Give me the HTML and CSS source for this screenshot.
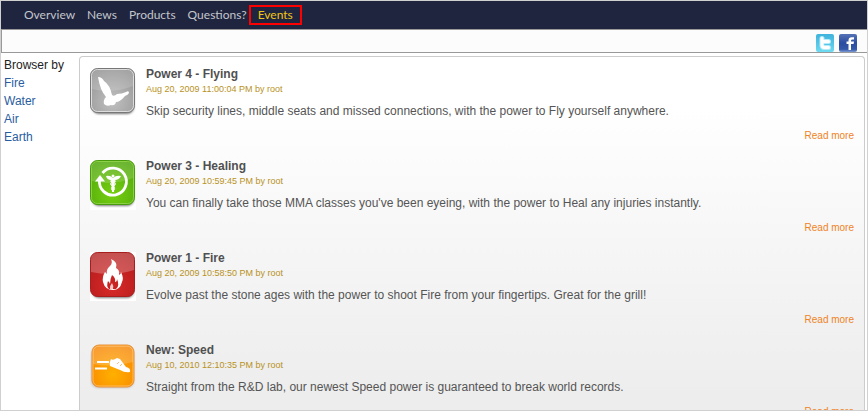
FILE: index.html
```html
<!DOCTYPE html>
<html lang="en">
<head>
<meta charset="utf-8">
<title>Events</title>
<link rel="stylesheet" href="styles.css">
</head>
<body>
<header>
  <nav class="nav">
    <a href="#">Overview</a>
    <a href="#">News</a>
    <a href="#">Products</a>
    <a href="#">Questions?</a>
    <a href="#" class="current">Events</a>
  </nav>
  <div class="social">
    <a href="#" aria-label="Twitter">
      <svg width="18" height="18" viewBox="0 0 18 18">
        <defs><linearGradient id="tw" x1="0" y1="0" x2="0" y2="1"><stop offset="0" stop-color="#3fb3dc"/><stop offset=".5" stop-color="#55c4e6"/><stop offset="1" stop-color="#6fdcf2"/></linearGradient></defs>
        <rect width="18" height="18" rx="2" fill="url(#tw)"/>
        <path d="M6 4.500V11Q6 13.500 8.500 13.500H12.500M6 7.500H12.500" fill="none" stroke="#b5ebf8" stroke-width="5" stroke-linecap="round"/>
        <path d="M6 4.500V11Q6 13.500 8.500 13.500H12.500M6 7.500H12.500" fill="none" stroke="#fff" stroke-width="3" stroke-linecap="round"/>
        <path d="M8.500 10.500H13" stroke="#55c4e6"/>
      </svg>
    </a>
    <a href="#" aria-label="Facebook">
      <svg width="18" height="18" viewBox="0 0 18 18">
        <defs><linearGradient id="fb" x1="0" y1="0" x2="0" y2="1"><stop offset="0" stop-color="#5472b4"/><stop offset=".5" stop-color="#2b4da0"/><stop offset=".85" stop-color="#3458a8"/><stop offset="1" stop-color="#7d9bd6"/></linearGradient></defs>
        <rect width="18" height="18" rx="2" fill="url(#fb)"/>
        <path d="M9.500 16V10H7.500V7.500H9.500V6.500Q9.500 3.200 12.700 3.200H15V5.500H13.500Q12 5.500 12 6.800V7.500H15L14.600 10H12V16Z" fill="#fff"/>
      </svg>
    </a>
  </div>
</header>
<div class="columns">
  <aside class="sidebar">
    <div>Browser by</div>
    <a href="#">Fire</a>
    <a href="#">Water</a>
    <a href="#">Air</a>
    <a href="#">Earth</a>
  </aside>
  <main class="panel">
    <article class="entry">
      <svg class="icon" width="46" height="50" viewBox="0 0 46 50">
        <defs>
          <filter id="soft" x="-20%" y="-20%" width="140%" height="140%"><feGaussianBlur stdDeviation="1"/></filter>
          <radialGradient id="gray" cx=".5" cy=".75" r=".8"><stop offset="0" stop-color="#c0c0c0"/><stop offset="1" stop-color="#929292"/></radialGradient>
        </defs>
        <rect x="2" y="5" width="42" height="41" rx="7" fill="#777" filter="url(#soft)"/>
        <rect x=".5" y=".5" width="44" height="44" rx="7" fill="url(#gray)" stroke="#777"/>
        <rect x="1.500" y="1.500" width="42" height="42" rx="6" fill="none" stroke="#ddd"/>
        <path d="M2 8Q2 2 8 2H37Q43 2 43 8V18Q23 26 2 21Z" fill="#fff" opacity=".16"/>
        <path d="M8 9Q12 9 14 13Q20 17 22 27Q24 29 27 26Q32 26 36 24Q39 22 39 25Q38 27 35 28Q30 34 26 34Q25 38 21 37Q17 39 14 36Q13 32 16 29Q10 22 8 9Z" fill="#fff"/>
      </svg>
      <div class="body">
        <h2>Power 4 - Flying</h2>
        <div class="date">Aug 20, 2009 11:00:04 PM by root</div>
        <p>Skip security lines, middle seats and missed connections, with the power to Fly yourself anywhere.</p>
        <a href="#" class="more">Read more</a>
      </div>
    </article>
    <article class="entry">
      <svg class="icon" width="46" height="50" viewBox="0 0 46 50">
        <defs><radialGradient id="green" cx=".5" cy=".75" r=".8"><stop offset="0" stop-color="#76cf10"/><stop offset="1" stop-color="#4ea50b"/></radialGradient></defs>
        <rect width="46" height="50" fill="#fff"/>
        <rect x="2" y="5" width="42" height="41" rx="7" fill="#777" filter="url(#soft)"/>
        <rect x=".5" y=".5" width="44" height="44" rx="7" fill="url(#green)" stroke="#489b0b"/>
        <rect x="1.500" y="1.500" width="42" height="42" rx="6" fill="none" stroke="#8bd046"/>
        <path d="M2 8Q2 2 8 2H37Q43 2 43 8V18Q23 26 2 21Z" fill="#fff" opacity=".16"/>
        <path d="M12.500 13A13.500 13.500 0 1 1 9.500 20" fill="none" stroke="#fff" stroke-width="2.800"/>
        <path d="M5 21.500L10 15L15 21.500Z" fill="#fff"/>
        <path d="M16 16Q20 15 23 18Q26 15 31 16Q29 20 25 20L24 32H22L21 20Q17 20 16 16Z" fill="#fff"/>
        <path d="M20 21Q27 22 25 25Q20 27 22 30M26 21Q19 22 21 25Q26 27 24 30" fill="none" stroke="#fff"/>
        <circle cx="23" cy="16" r="1.500" fill="#fff"/>
      </svg>
      <div class="body">
        <h2>Power 3 - Healing</h2>
        <div class="date">Aug 20, 2009 10:59:45 PM by root</div>
        <p>You can finally take those MMA classes you've been eyeing, with the power to Heal any injuries instantly.</p>
        <a href="#" class="more">Read more</a>
      </div>
    </article>
    <article class="entry">
      <svg class="icon" width="46" height="50" viewBox="0 0 46 50">
        <defs><radialGradient id="red" cx=".5" cy=".75" r=".8"><stop offset="0" stop-color="#d92a2a"/><stop offset="1" stop-color="#b01a1a"/></radialGradient></defs>
        <rect width="46" height="49" fill="#fff"/>
        <rect x="2" y="5" width="42" height="41" rx="7" fill="#777" filter="url(#soft)"/>
        <rect x=".5" y=".5" width="44" height="44" rx="7" fill="url(#red)" stroke="#a81d1d"/>
        <path d="M1 8Q1 1 8 1H37Q44 1 44 8V18Q23 25 1 20Z" fill="#fff" opacity=".24"/>
        <path d="M21 7Q28 10 26 16Q30 18 29 23Q31 22 31 20Q34 26 32 30Q30 38 23 38Q15 38 13 30Q12 25 15 20L17 22Q16 17 20 14Q23 11 21 7Z" fill="#fff"/>
        <path d="M22 23Q26 26 25 30Q27 30 27 27Q30 34 26 37H19Q16 34 18 29Q20 31 20 32Q20 27 22 23Z" fill="#c92222"/>
        <path d="M22 31Q24 34 23 37H20Q20 33 22 31Z" fill="#f6caca"/>
      </svg>
      <div class="body">
        <h2>Power 1 - Fire</h2>
        <div class="date">Aug 20, 2009 10:58:50 PM by root</div>
        <p>Evolve past the stone ages with the power to shoot Fire from your fingertips. Great for the grill!</p>
        <a href="#" class="more">Read more</a>
      </div>
    </article>
    <article class="entry">
      <svg class="icon" width="46" height="50" viewBox="0 0 46 50">
        <defs><radialGradient id="orange" cx=".5" cy=".7" r=".75"><stop offset="0" stop-color="#ffb000"/><stop offset="1" stop-color="#f78300"/></radialGradient></defs>
        <rect x="1" y="4" width="43" height="40" rx="7" fill="#c5c5c5" filter="url(#soft)"/>
        <rect x="2" y="1" width="42" height="42" rx="7" fill="url(#orange)" stroke="#e59038"/>
        <rect x="3" y="2" width="40" height="40" rx="6" fill="none" stroke="#ffba5c"/>
        <path d="M3 8Q3 2 9 2H37Q43 2 43 8V18Q23 24 3 20Z" fill="#fff" opacity=".2"/>
        <path d="M7 18H19M5 24.500H17" stroke="#fff" stroke-width="2"/>
        <path d="M21 15Q23 17 27 14L30 15L36 23Q41 24 40 28Q35 29 30 26L20 22Q19 19 21 15Z" fill="#fff"/>
        <path d="M29 18L27 20M32 20L30 22" fill="none" stroke="#f5a040" stroke-width=".7"/>
      </svg>
      <div class="body">
        <h2>New: Speed</h2>
        <div class="date">Aug 10, 2010 12:10:35 PM by root</div>
        <p>Straight from the R&amp;D lab, our newest Speed power is guaranteed to break world records.</p>
        <a href="#" class="more">Read more</a>
      </div>
    </article>
  </main>
</div>
</body>
</html>
```
FILE: styles.css
```css
* { box-sizing: border-box; }
body {
  margin: 0;
  height: 100vh;
  overflow: hidden;
  display: flex;
  flex-direction: column;
  border: 1px solid #d0d0d0;
  background: #fff;
  color: #555;
  font: 12px/18px "Liberation Sans", Arial, sans-serif;
}
a { text-decoration: none; }
.nav {
  display: flex;
  align-items: center;
  gap: 12px;
  height: 28px;
  padding-left: 23px;
  background: #20253f;
  font: 12px/16px Lato, sans-serif;
}
.nav a { color: #c3c5cc; }
.nav .current {
  margin-left: -10px;
  padding: 0 7px;
  border: 2px solid #f00;
  color: #f0c419;
}
.social {
  display: flex;
  justify-content: flex-end;
  gap: 5px;
  height: 24px;
  padding: 4px 10px 0 0;
  border: 1px solid #999;
  border-right: 0;
  background: #fcfcfc;
}
.social a, .social svg { display: block; }
.columns {
  flex: 1;
  min-height: 0;
  display: flex;
  padding: 3px 2px 0 3px;
}
.sidebar { width: 75px; flex: none; color: #222; }
.sidebar a { display: block; color: #2a5d9f; }
.panel {
  flex: 1;
  overflow: hidden;
  padding: 8px 10px;
  border: 1px solid #ccc;
  border-bottom: 0;
  border-radius: 4px 4px 0 0;
  background: linear-gradient(#fff 0, #fff 50px, #f2f2f2 250px, #ededed 340px);
}
.entry { display: flex; gap: 10px; height: 92px; }
.icon { flex: none; margin-top: 3px; }
.body { flex: 1; display: flex; flex-direction: column; }
h2 { margin: 0; font-size: 12px; line-height: 18px; color: #505050; }
.date { font-size: 9px; line-height: 12px; color: #b8921d; }
p { margin: 7px 0; }
.more {
  align-self: flex-end;
  font-size: 10px;
  line-height: 18px;
  color: #f0831e;
}
```
